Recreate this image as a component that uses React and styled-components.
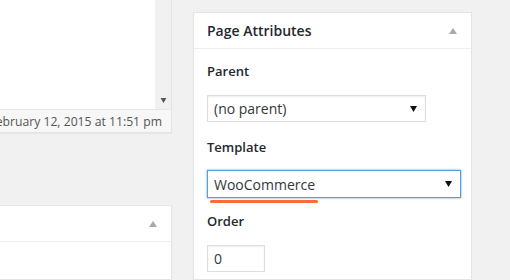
import React from 'react';
import styled, { createGlobalStyle } from 'styled-components';

const GlobalStyle = createGlobalStyle`
  html, body {
    margin: 0;
    padding: 0;
    background: #f1f1f1;
    font-family: "Open Sans", "Liberation Sans", sans-serif;
    color: #444;
  }
`;

const Screen = styled.div`
  width: 510px;
  height: 280px;
  overflow: hidden;
  display: flex;
  gap: 21px;
`;

const LeftColumn = styled.div`
  width: 172px;
  flex: none;
  display: flex;
  flex-direction: column;
`;

const Editor = styled.div`
  border-right: 1px solid #e5e5e5;
  border-bottom: 1px solid #e5e5e5;
  box-shadow: 0 1px 1px rgba(0, 0, 0, 0.04);
`;

const EditorBody = styled.div`
  height: 109px;
  display: flex;
  background: #fff;
`;

const EditArea = styled.div`
  flex: 1;
`;

const ScrollTrack = styled.div`
  width: 16px;
  background: #f1f1f1;
  display: flex;
  align-items: flex-end;
  justify-content: center;
  padding-bottom: 6px;
  box-sizing: border-box;
`;

const StatusBar = styled.div`
  height: 22px;
  background: #f7f7f7;
  border-top: 1px solid #e8e8e8;
  display: flex;
  justify-content: flex-end;
  align-items: center;
  padding-right: 9px;
  font-size: 12.2px;
  color: #555;
  white-space: nowrap;
  overflow: hidden;
`;

const Postbox = styled.div`
  background: #fff;
  border: 1px solid #e5e5e5;
  box-shadow: 0 1px 1px rgba(0, 0, 0, 0.04);
  box-sizing: border-box;
  flex: ${p => (p.$width ? 'none' : 1)};
  width: ${p => (p.$width ? `${p.$width}px` : 'auto')};
  margin-top: ${p => p.$top}px;
  border-left-width: ${p => (p.$cut ? 0 : 1)}px;
`;

const Header = styled.div`
  height: 35px;
  border-bottom: 1px solid #eee;
  display: flex;
  align-items: center;
  justify-content: space-between;
  padding: 0 14px 0 13px;
`;

const Title = styled.h2`
  margin: 0;
  font-size: 14px;
  font-weight: 600;
  color: #23282d;
  line-height: 18px;
`;

const Inside = styled.div`
  padding: 13px 13px 0;
  display: flex;
  flex-direction: column;
  align-items: flex-start;
`;

const Label = styled.p`
  margin: 0;
  font-size: 13px;
  font-weight: 600;
  line-height: 18px;
  color: #23282d;
  margin-top: ${p => p.$gap || 0}px;
`;

const SelectBox = styled.div`
  position: relative;
  box-sizing: border-box;
  width: ${p => p.$width}px;
  height: ${p => p.$height}px;
  margin-top: ${p => p.$gap}px;
  border: 1px solid ${p => (p.$focus ? '#5b9dd9' : '#ddd')};
  box-shadow: ${p =>
    p.$focus ? '0 0 2px rgba(30, 140, 190, 0.8)' : 'inset 0 1px 2px rgba(0, 0, 0, 0.07)'};
  background: #fff;
  display: flex;
  align-items: center;
  justify-content: space-between;
  padding: 0 8px 0 6px;
  font-size: 14px;
  color: #32373c;
`;

const Underline = styled.div`
  position: absolute;
  left: 2px;
  top: calc(100% + 3px);
  width: 108px;
  height: 3px;
  border-radius: 2px;
  background: #fb6b3d;
`;

const Caret = ({ color = '#111', w = 7, h = 6 }) => (
  <svg width={w} height={h} viewBox="0 0 7 6">
    <path d="M0 0 H7 L3.5 6 Z" fill={color} />
  </svg>
);

const Toggle = () => (
  <svg width="8" height="6" viewBox="0 0 8 6">
    <path d="M4 0 L8 6 H0 Z" fill="#a7aaad" />
  </svg>
);

export default function App() {
  return (
    <>
      <GlobalStyle />
      <Screen>
        <LeftColumn>
          <Editor>
            <EditorBody>
              <EditArea />
              <ScrollTrack>
                <Caret color="#555" w={7} h={5} />
              </ScrollTrack>
            </EditorBody>
            <StatusBar>Last edited on February 12, 2015 at 11:51 pm</StatusBar>
          </Editor>
          <Postbox $top={72} $cut>
            <Header>
              <Title />
              <Toggle />
            </Header>
          </Postbox>
        </LeftColumn>
        <Postbox $top={12} $width={279}>
          <Header>
            <Title>Page Attributes</Title>
            <Toggle />
          </Header>
          <Inside>
            <Label>Parent</Label>
            <SelectBox $width={219} $height={27} $gap={15}>
              (no parent)
              <Caret />
            </SelectBox>
            <Label $gap={16}>Template</Label>
            <SelectBox $width={254} $height={28} $gap={14} $focus>
              WooCommerce
              <Caret />
              <Underline />
            </SelectBox>
            <Label $gap={14}>Order</Label>
            <SelectBox $width={58} $height={27} $gap={15}>
              0
            </SelectBox>
          </Inside>
        </Postbox>
      </Screen>
    </>
  );
}
